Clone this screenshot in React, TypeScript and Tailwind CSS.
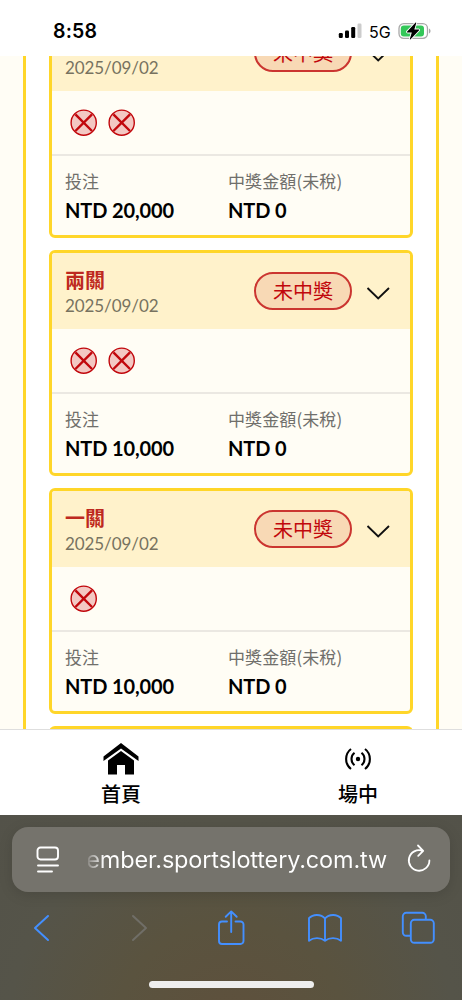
import { clsx } from "clsx";

interface Bet {
  title?: string;
  date: string;
  legs: number;
  stake: string;
  payout: string;
}

const bets: Bet[] = [
  { date: "2025/09/02", legs: 2, stake: "20,000", payout: "0" },
  { title: "兩關", date: "2025/09/02", legs: 2, stake: "10,000", payout: "0" },
  { title: "一關", date: "2025/09/02", legs: 1, stake: "10,000", payout: "0" },
];

function StatusBar() {
  return (
    <header className="flex h-14 shrink-0 items-center justify-between bg-white pt-[6px] pr-[31px] pl-[53px] font-['Inter',sans-serif] text-black">
      <span className="pt-[1px] text-[19.5px] font-semibold tracking-[0.2px]">8:58</span>
      <div className="flex items-center">
        <svg className="mr-[2px]" width="24" height="16" viewBox="0 0 24 16">
          <rect x="0.8" y="10" width="4" height="5" rx="1.2" />
          <rect x="7" y="7.5" width="4" height="7.5" rx="1.2" />
          <rect x="13.2" y="4" width="4" height="11" rx="1.2" />
          <rect x="19.5" y="0.5" width="4" height="14.5" rx="1.2" fill="#ccc" />
        </svg>
        <span className="ml-[5px] w-[23px] pt-[1px] text-[16px]">5G</span>
        <svg className="ml-[6px]" width="33" height="18" viewBox="0 0 33 18">
          <rect x="1" y="1.7" width="28.5" height="14.6" rx="4.7" fill="#fff" stroke="#a8a8a8" strokeWidth="1.3" />
          <rect x="2.8" y="3.5" width="23.2" height="11" rx="3" fill="#34c759" />
          <path d="M31 6.5v5c2-.8 2-4.2 0-5z" fill="#a8a8a8" />
          <path
            d="M17.4.8 9.2 9.4c-.5.6-.1 1.1.5 1.1h4.1l-2 6.4c-.1.5.4.7.8.3l8.3-8.7c.4-.5.1-1.1-.5-1.1h-4.1L18.2 1.2c.2-.5-.3-.8-.8-.4z"
            stroke="#fff"
            strokeWidth="1.8"
            paintOrder="stroke"
          />
        </svg>
      </div>
    </header>
  );
}

function LostLeg() {
  return (
    <svg width="28" height="28" viewBox="0 0 28 28" fill="none" stroke="#c1070c">
      <circle cx="13.700" cy="13.700" r="12.6" fill="#f3c8c3" strokeWidth="1.4" />
      <path d="m5.400 5.400 16.600 16.600M22 5.400 5.400 22" strokeWidth="2.4" />
    </svg>
  );
}

function Amount({ label, value, className }: { label: string; value: string; className?: string }) {
  return (
    <div className={clsx("flex flex-col", className)}>
      <span className="h-[26px] font-['Noto_Sans_CJK_TC',sans-serif] text-[17px] leading-[26px] tracking-[0.1px] text-[#706f6b]">
        {label}
      </span>
      <span className="mt-[2px] h-[28px] text-[20px] leading-[28px] font-bold tracking-[-0.12px] whitespace-nowrap text-black">
        NTD {value}
      </span>
    </div>
  );
}

function BetCard({ bet }: { bet: Bet }) {
  return (
    <article className="h-[226px] shrink-0 overflow-hidden rounded-[6px] border-[3px] border-[#ffd629] bg-[#fffdf5]">
      <div className="flex h-[76px] items-center bg-[#fff2cb] pl-[13px]">
        <div className="flex w-[189px] flex-col pt-[1px]">
          <span className="h-[26px] text-[20px] leading-[26px] font-bold text-[#be2920]">{bet.title}</span>
          <span className="h-6 pt-[1px] text-[17px] leading-6 tracking-[-0.08px] text-[#777260]">{bet.date}</span>
        </div>
        <div className="flex h-[38px] w-[98px] items-center justify-center rounded-full border-2 border-[#cb3530] bg-[#f8d9b5] text-[20px] text-[#c1070c]">
          未中獎
        </div>
        <svg className="mt-[3px] ml-[14px]" width="24" height="14" viewBox="0 0 24 14" fill="none" stroke="#111">
          <path d="m1.500 2 10.700 10.500L23 2" strokeWidth="1.9" />
        </svg>
      </div>
      <div className="flex h-[65px] items-center gap-[9.5px] border-b-2 border-[#ebe8e2] pt-[1px] pl-[18px]">
        {Array.from({ length: bet.legs }, (_, i) => (
          <LostLeg key={i} />
        ))}
      </div>
      <div className="flex pt-[12px] pl-[13px]">
        <Amount className="w-[163px]" label="投注" value={bet.stake} />
        <Amount label="中獎金額(未稅)" value={bet.payout} />
      </div>
    </article>
  );
}

function BottomNav() {
  return (
    <nav className="flex h-[86px] shrink-0 gap-[29px] border-t border-[#dedede] bg-white pl-[17px] text-[20px] font-medium text-black">
      <div className="flex w-[208px] flex-col items-center pt-[12px]">
        <svg width="36" height="34" viewBox="0 0 36 34">
          <path d="M.5 14.500 18 1l17.500 13.500v4.500L18 6.500.5 19z" />
          <path d="M5 18.500 18 9l13 9.500V32.500h-9V23h-8v9.500H5z" />
        </svg>
        <span className="mt-[3px] leading-[30px]">首頁</span>
      </div>
      <div className="flex w-[208px] flex-col items-center pt-[12px]">
        <svg width="28" height="34" viewBox="0 0 28 34" fill="none" stroke="#000" strokeWidth="2.100">
          <circle cx="14" cy="17" r="2.200" fill="#000" stroke="none" />
          <path d="M10.500 10.800c-4 3.200-4 9.200 0 12.400M17.500 10.800c4 3.200 4 9.200 0 12.400M7 7c-6.500 5-6.500 15 0 20M21 7c6.500 5 6.500 15 0 20" />
        </svg>
        <span className="mt-[3px] leading-[30px]">場中</span>
      </div>
    </nav>
  );
}

function BrowserBar() {
  return (
    <footer className="flex h-[185px] shrink-0 flex-col bg-[radial-gradient(ellipse_at_50%_115%,#5e503c_0%,#5a533f_35%,#555449_68%,#535249_100%)] pt-3">
      <div className="mx-3 flex h-[65px] shrink-0 items-center rounded-[16px] bg-[#75736c] pl-[24px] shadow-[0_3px_14px_rgba(0,0,0,0.13)]">
        <svg width="24" height="28" viewBox="0 0 24 28" fill="none" stroke="#fff" strokeWidth="1.9" strokeLinecap="round">
          <rect x="1.500" y="1.500" width="20.500" height="12" rx="3" />
          <path d="M2 19.500h20M2 25.500h14" />
        </svg>
        <div className="ml-[28px] flex w-[299px] justify-end bg-[linear-gradient(90deg,#8d8b86,#fff_16px)] bg-clip-text font-['Inter',sans-serif] text-[23.5px] leading-8 tracking-[-0.16px] whitespace-nowrap text-transparent">
          ember.sportslottery.com.tw
        </div>
        <svg className="mb-[3px] ml-[19px]" width="26" height="30" viewBox="0 0 26 30" fill="none" stroke="#fff" strokeWidth="1.8" strokeLinecap="round" strokeLinejoin="round">
          <path d="M23.400 17.500A10.300 10.300 0 1 1 16.700 7.800M12 2.500l5.200 5.300-5 5" />
        </svg>
      </div>
      <div className="flex h-[71px] items-center text-[#438fff]">
        <svg className="ml-[33px]" width="18" height="28" viewBox="0 0 18 28" fill="none" stroke="currentColor" strokeWidth="2" strokeLinecap="round" strokeLinejoin="round">
          <path d="M15 2 2 14l13 12" />
        </svg>
        <svg className="ml-[79px]" width="18" height="28" viewBox="0 0 18 28" fill="none" stroke="#706e67" strokeWidth="2" strokeLinecap="round" strokeLinejoin="round">
          <path d="m3 2 13 12L3 26" />
        </svg>
        <svg className="ml-[69px]" width="30" height="36" viewBox="0 0 30 36" fill="none" stroke="currentColor" strokeWidth="1.9" strokeLinecap="round" strokeLinejoin="round">
          <path d="M10 11.500H5a3 3 0 0 0-3 3v16.500a3 3 0 0 0 3 3h18.500a3 3 0 0 0 3-3v-16.500a3 3 0 0 0-3-3H18.500M14.200 22V1.400M8.700 6.800l5.500-5.400 5.500 5.400" />
        </svg>
        <svg className="ml-[60px]" width="36" height="30" viewBox="0 0 36 30" fill="none" stroke="currentColor" strokeWidth="1.9" strokeLinejoin="round">
          <path d="M18 5.500C14 .8 6 .8 2 5.200v22.500c4.500-3.500 11.500-3.500 16 0 4.500-3.500 11.500-3.500 16 0V5.200C30 .8 22 .8 18 5.500zM18 5.500v22.500" />
        </svg>
        <svg className="ml-[58px]" width="34" height="34" viewBox="0 0 34 34" fill="none" stroke="currentColor" strokeWidth="1.900">
          <rect x="9.800" y="8.800" width="23" height="23" rx="3.500" />
          <path d="M9.800 24.800H5.300a3.500 3.500 0 0 1-3.500-3.500v-16A3.500 3.500 0 0 1 5.300 1.800h16a3.500 3.500 0 0 1 3.500 3.500V8.800" />
        </svg>
      </div>
      <div className="mx-auto mt-[18px] h-[7px] w-[165px] rounded-full bg-[#eee]" />
    </footer>
  );
}

export default function App() {
  return (
    <div className="flex h-[1000px] w-[462px] flex-col overflow-hidden bg-white font-['Lato','Noto_Sans_CJK_TC',sans-serif]">
      <StatusBar />
      <main className="h-[673px] shrink-0 overflow-hidden bg-[#fffdf5] px-[23px]">
        <div className="flow-root h-full w-[416px] border-x-[3px] border-[#ffd629] bg-white px-[23px]">
          <div className="mt-[-44px] flex flex-col gap-3">
            {bets.map((bet, i) => (
              <BetCard key={i} bet={bet} />
            ))}
            {/* top edge of the next card, cut by the nav */}
            <div className="h-[10px] rounded-t-[6px] border-[3px] border-b-0 border-[#ffd629]" />
          </div>
        </div>
      </main>
      <BottomNav />
      <BrowserBar />
    </div>
  );
}
